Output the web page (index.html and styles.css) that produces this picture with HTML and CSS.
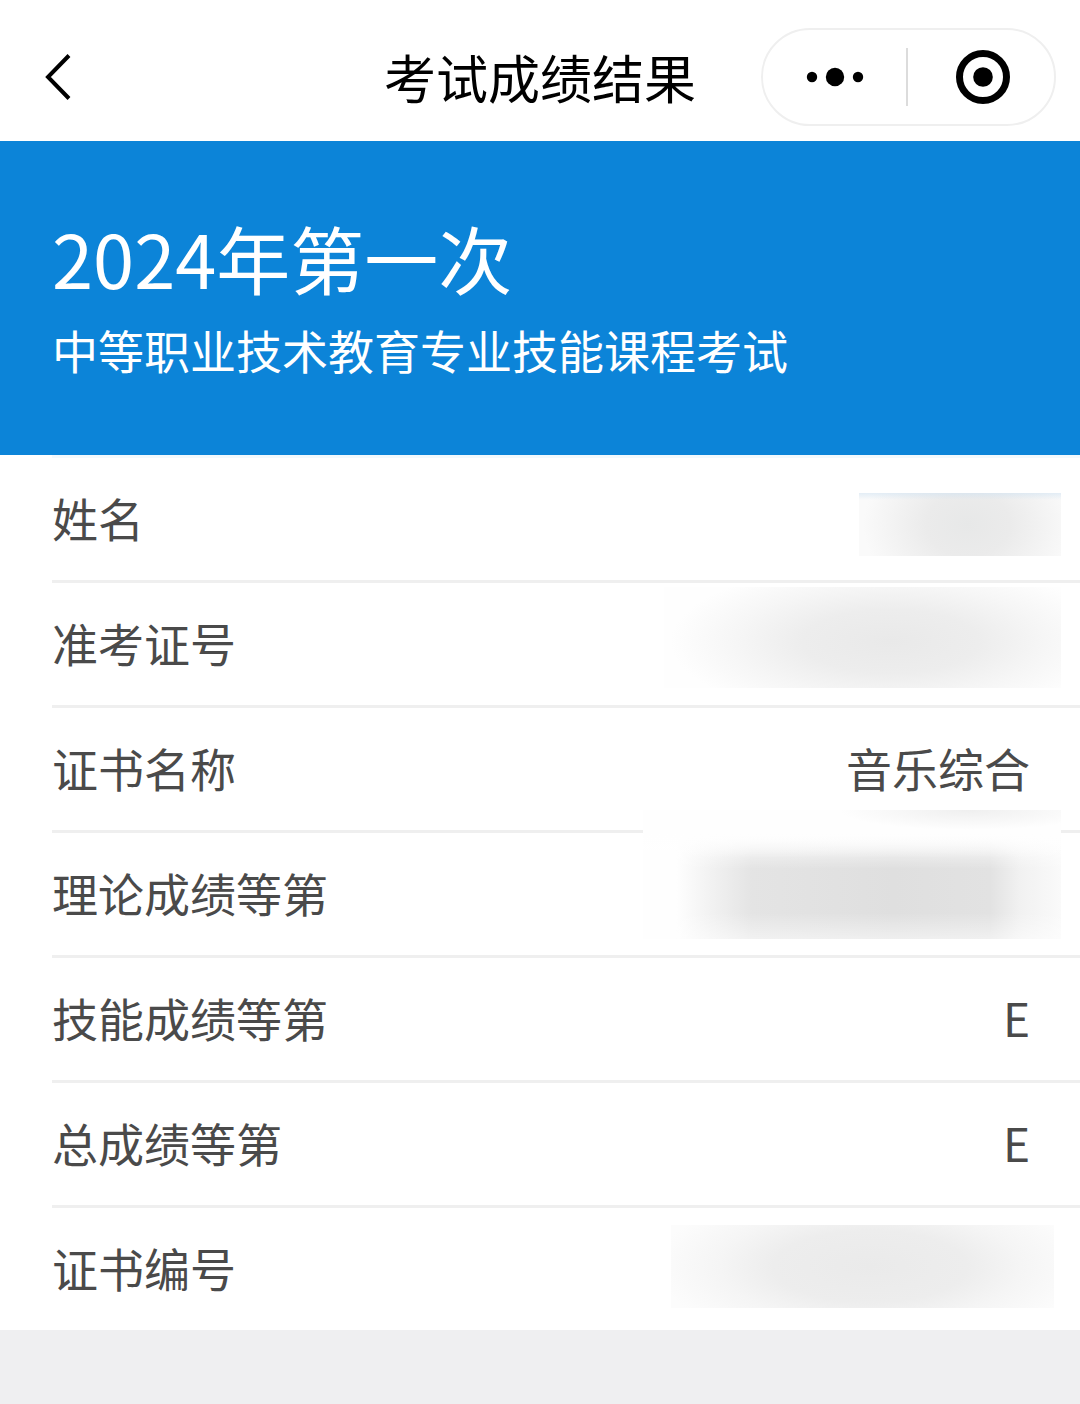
FILE: index.html
```html
<!DOCTYPE html>
<html lang="zh-CN">
<head>
  <meta charset="UTF-8" />
  <meta name="viewport" content="width=device-width, initial-scale=1.0">
  <title>考试成绩结果</title>
  <link rel="stylesheet" href="styles.css">
</head>
<body>
  <header class="navbar">
    <button class="back" aria-label="返回">
      <svg width="28" height="48" viewBox="0 0 28 48" fill="none" stroke="#000" stroke-width="4">
        <path d="M25 2.5 4 24l21 21.5" />
      </svg>
    </button>
    <h1>考试成绩结果</h1>
    <div class="capsule">
      <button aria-label="更多">
        <svg width="58" height="20" viewBox="0 0 58 20">
          <circle cx="6" cy="10" r="5.2" />
          <circle cx="29" cy="10" r="9.2" />
          <circle cx="52" cy="10" r="5.2" />
        </svg>
      </button>
      <button aria-label="关闭">
        <svg width="54" height="54" viewBox="0 0 54 54">
          <circle cx="27" cy="27" r="23.5" fill="none" stroke="#000" stroke-width="7" />
          <circle cx="27" cy="27" r="9.8" />
        </svg>
      </button>
    </div>
  </header>

  <section class="banner">
    <h2>2024年第一次</h2>
    <p>中等职业技术教育专业技能课程考试</p>
  </section>

  <dl class="results">
    <div class="row">
      <dt>姓名</dt>
      <dd><span class="mask mask-name"></span></dd>
    </div>
    <div class="row">
      <dt>准考证号</dt>
      <dd><span class="mask mask-ticket"></span></dd>
    </div>
    <div class="row">
      <dt>证书名称</dt>
      <dd>音乐综合</dd>
    </div>
    <div class="row">
      <dt>理论成绩等第</dt>
      <dd><span class="mask mask-theory"></span></dd>
    </div>
    <div class="row">
      <dt>技能成绩等第</dt>
      <dd>E</dd>
    </div>
    <div class="row">
      <dt>总成绩等第</dt>
      <dd>E</dd>
    </div>
    <div class="row">
      <dt>证书编号</dt>
      <dd><span class="mask mask-cert"></span></dd>
    </div>
  </dl>
</body>
</html>
```
FILE: styles.css
```css
* {
  box-sizing: border-box;
}

body {
  margin: 0;
  background: #efeff1;
  color: #4a4a4a;
  font-family: "Noto Sans CJK SC", sans-serif;
}

h1, h2, p, dl, dd {
  margin: 0;
  font-weight: 400;
}

button {
  display: flex;
  align-items: center;
  justify-content: center;
  padding: 0;
  border: none;
  background: none;
  cursor: pointer;
}

svg {
  display: block;
}

.navbar {
  display: grid;
  grid-template-columns: 1fr auto 1fr;
  align-items: center;
  padding: 28px 24px 15px 44px;
  background: #fff;
}

.navbar h1 {
  margin-right: 20px;
  color: #000;
  font-size: 52px;
  line-height: 96px;
}

.back {
  justify-self: start;
}

.capsule {
  display: flex;
  justify-self: end;
  width: 295px;
  height: 98px;
  padding: 18px 0;
  border: 2px solid #efefef;
  border-radius: 49px;
}

.capsule button {
  flex: 1;
}

.capsule button + button {
  padding-left: 3px;
  border-left: 2px solid #dcdcdc;
}

.banner {
  padding: 70px 52px 68px;
  background: #0c84d8;
  color: #fff;
}

.banner h2 {
  font-size: 74px;
  line-height: 92px;
}

.banner p {
  padding-top: 8px;
  font-size: 46px;
  line-height: 76px;
}

.results {
  padding-left: 52px;
  background: #fff;
}

.row {
  position: relative;
  display: flex;
  justify-content: space-between;
  height: 125px;
  padding-right: 50px;
  border-top: 3px solid #efefef;
  font-size: 46px;
  line-height: 118px;
}

.row:first-child {
  border-color: #f3f9fd;
}

/* blurred private values */
.mask {
  position: absolute;
  right: 19px;
}

.mask-name {
  top: 35px;
  width: 202px;
  height: 63px;
  background:
    linear-gradient(rgba(205, 225, 242, 0.5), rgba(205, 225, 242, 0) 7px),
    radial-gradient(ellipse 105px 80px at 54% 50%, #e7e8e8, #ebebeb 40%, #fafafa);
}

.mask-ticket {
  top: 4px;
  width: 397px;
  height: 101px;
  background: radial-gradient(ellipse 220px 80px at 57% 54%, #e9e9e9, #ededed 40%, #f6f6f6 70%, #fefefe);
}

.mask-theory {
  top: -23px;
  width: 418px;
  height: 129px;
  background:
    linear-gradient(#fefefe, rgba(255, 255, 255, 0) 24px) 0 24px / 100% 105px no-repeat,
    radial-gradient(ellipse 130px 20px at 78% 0, #efefef, #fefefe) 0 0 / 100% 24px no-repeat,
    linear-gradient(rgba(255, 255, 255, 0.9), rgba(255, 255, 255, 0) 35px, rgba(255, 255, 255, 0) 75%, rgba(255, 255, 255, 0.5)) 0 24px / 100% 105px no-repeat,
    linear-gradient(90deg, #fefefe 8%, #f2f2f2 16%, #e4e4e4 26%, #dfdfdf 60%, #e2e2e2 83%, #f1f1f1 90%, #fafafa);
}

.mask-cert {
  right: 26px;
  top: 17px;
  width: 383px;
  height: 83px;
  background: radial-gradient(ellipse 215px 80px at 52% 50%, #eaeaea, #ededed 45%, #f5f5f5 70%, #fcfcfc);
}
```
